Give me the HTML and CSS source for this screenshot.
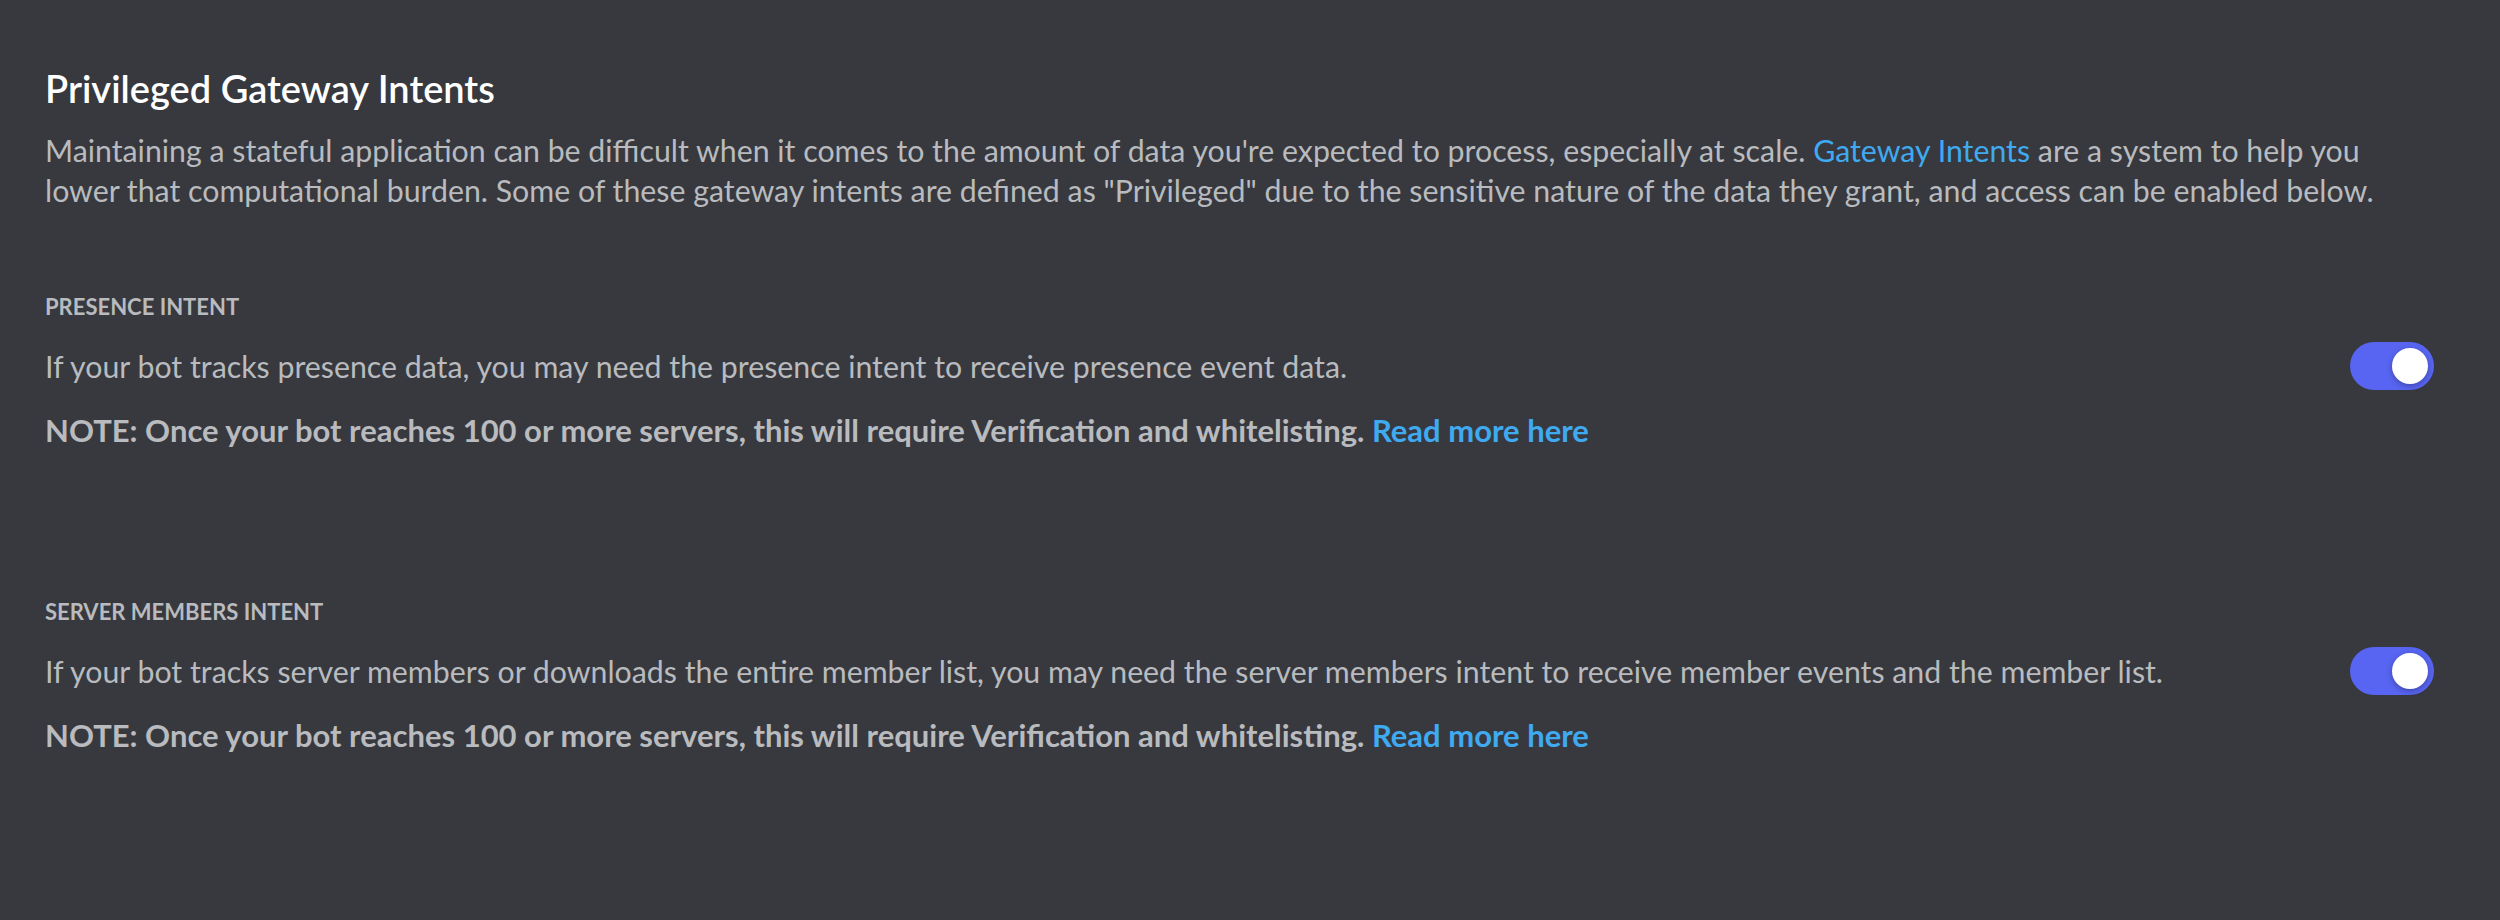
FILE: index.html
```html
<!DOCTYPE html>
<html lang="en">
<head>
<meta charset="utf-8">
<title>Privileged Gateway Intents</title>
<link rel="stylesheet" href="styles.css">
</head>
<body>
<main class="page">
  <h1 class="title">Privileged Gateway Intents</h1>
  <p class="intro">Maintaining a stateful application can be difficult when it comes to the amount of data you're expected to process, especially at scale. <a class="link" href="#">Gateway Intents</a> are a system to help you lower that computational burden. Some of these gateway intents are defined as "Privileged" due to the sensitive nature of the data they grant, and access can be enabled below.</p>

  <section class="intent">
    <h2 class="label">Presence Intent</h2>
    <div class="row">
      <p class="desc">If your bot tracks presence data, you may need the presence intent to receive presence event data.</p>
      <div class="toggle"><span class="knob"></span></div>
    </div>
    <p class="note">NOTE: Once your bot reaches 100 or more servers, this will require Verification and whitelisting. <a class="note-link" href="#">Read more here</a></p>
  </section>

  <section class="intent">
    <h2 class="label">Server Members Intent</h2>
    <div class="row">
      <p class="desc">If your bot tracks server members or downloads the entire member list, you may need the server members intent to receive member events and the member list.</p>
      <div class="toggle"><span class="knob"></span></div>
    </div>
    <p class="note">NOTE: Once your bot reaches 100 or more servers, this will require Verification and whitelisting. <a class="note-link" href="#">Read more here</a></p>
  </section>
</main>
</body>
</html>
```
FILE: styles.css
```css
html, body {
  margin: 0;
  padding: 0;
  background: #37393f;
  height: 100%;
}
body {
  font-family: Lato, "Open Sans", sans-serif;
  color: #b9bbbe;
}
.page {
  padding: 66px 66px 0 45px;
}
.title {
  margin: 0;
  font-size: 38px;
  line-height: 44px;
  font-weight: 600;
  color: #ffffff;
}
.intro {
  margin: 20px 0 0 0;
  font-size: 30.3px;
  line-height: 40px;
  color: #b9bbbe;
}
.link, .note-link {
  color: #40aaf0;
  text-decoration: none;
}
.intent {
  margin-top: 81px;
}
.intent + .intent {
  margin-top: 146px;
}
.label {
  margin: 0;
  font-size: 22px;
  line-height: 32px;
  font-weight: 700;
  text-transform: uppercase;
  color: #b9bbbe;
}
.row {
  display: flex;
  align-items: center;
  margin-top: 19px;
}
.desc {
  flex: 1;
  margin: 0;
  font-size: 30.3px;
  line-height: 40px;
}
.toggle {
  flex: none;
  box-sizing: border-box;
  width: 84px;
  height: 48px;
  border-radius: 24px;
  background: #5865f2;
  padding: 6px;
  display: flex;
  justify-content: flex-end;
  margin-left: 40px;
}
.knob {
  width: 36px;
  height: 36px;
  border-radius: 50%;
  background: #ffffff;
  box-shadow: 0 2px 6px rgba(0, 0, 0, 0.3);
}
.note {
  margin: 20px 0 0 0;
  font-size: 31px;
  line-height: 40px;
  font-weight: 700;
}
```
